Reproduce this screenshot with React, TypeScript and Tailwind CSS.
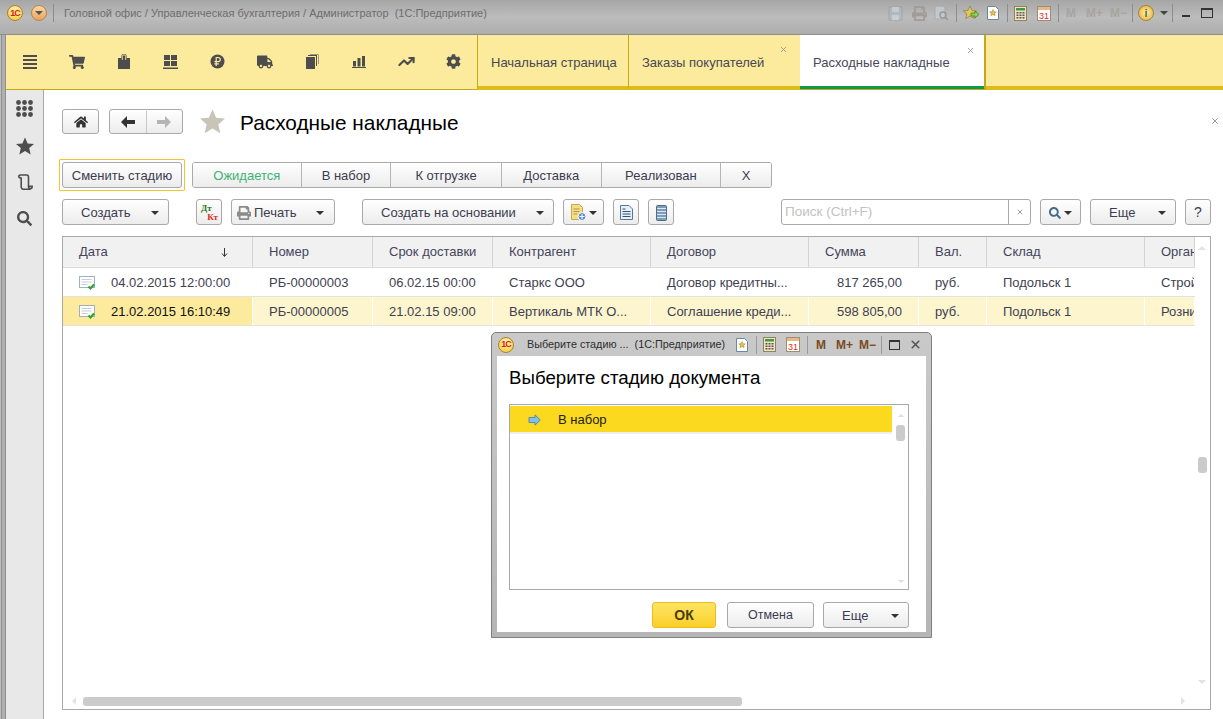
import type { ReactNode } from "react";
import { FaShoppingCart, FaTruck, FaCog, FaHome, FaSearch, FaPrint } from "react-icons/fa";
import { TrendingUp, X } from "lucide-react";

function Caret({ className = "" }: { className?: string }) {
  return <span className={`inline-block w-0 h-0 border-x-[4px] border-x-transparent border-t-[4px] border-t-[#333] ${className}`} />;
}

function Logo1C() {
  return (
    <span className="flex h-[16px] w-[16px] items-center justify-center rounded-full border border-[#a8822a] bg-[radial-gradient(circle_at_50%_30%,#fff6b0,#f7c531)] text-[9px] font-bold leading-none tracking-[-1px] text-[#d8231f]">
      1С
    </span>
  );
}

const btn = "flex items-center rounded-[3px] border border-[#a9a9a9] bg-gradient-to-b from-white to-[#ececec] pt-[1px] text-[#3c3c50]";

function FloppyIcon() {
  return (
    <svg width="15" height="15" viewBox="0 0 15 15" className="opacity-60">
      <path d="M1 1h13v13H1z" fill="#a9bac6" stroke="#8a9aa6" />
      <path d="M4 1h7v5H4zM4 9h7v5H4z" fill="#d5dadd" />
    </svg>
  );
}

function PreviewIcon() {
  return (
    <svg width="16" height="16" viewBox="0 0 16 16" className="opacity-60">
      <path d="M2 1h8l2 2v11H2z" fill="#ccd4da" stroke="#9aa7b1" />
      <circle cx="10" cy="10" r="3" fill="none" stroke="#87807a" strokeWidth="1.4" />
      <path d="M12 12l3 3" stroke="#87807a" strokeWidth="1.6" />
    </svg>
  );
}

function FavArrowIcon() {
  return (
    <svg width="16" height="16" viewBox="0 0 16 16">
      <path d="M7 1l2 4.400 4.600.5-3.400 3 1 4.600L7 11l-4.200 2.500 1-4.600L.4 5.900 5 5.400z" fill="#e3c65c" stroke="#8a7a3a" strokeWidth=".7" />
      <path d="M8 8h4V6l4 3.500-4 3.500V11H8z" fill="#8fd14f" stroke="#3d7d20" strokeWidth=".7" />
    </svg>
  );
}

function FavDocIcon() {
  return (
    <svg width="12" height="14" viewBox="0 0 12 14">
      <path d="M.5.500h8l3 3v10H.5z" fill="#fff" stroke="#6b86a0" />
      <path d="M6 3.500l1 2.200 2.300.2-1.700 1.500.5 2.300L6 8.500 3.900 9.700l.5-2.300-1.700-1.500L5 5.700z" fill="#e6bd45" stroke="#9a8130" strokeWidth=".5" />
    </svg>
  );
}

function CalcIcon() {
  return (
    <svg width="13" height="15" viewBox="0 0 13 15">
      <rect x=".5" y=".5" width="12" height="14" fill="#f3e3c0" stroke="#8f8462" />
      <rect x="2" y="2" width="9" height="2.500" fill="#3f9a3f" />
      {[6, 8.500, 11].map((y) => [2.500, 5.500, 8.500].map((x) => <rect key={`${x}-${y}`} x={x} y={y} width="2" height="1.500" fill="#555" />))}
    </svg>
  );
}

function CalendarIcon() {
  return (
    <svg width="14" height="15" viewBox="0 0 14 15">
      <rect x=".5" y=".5" width="13" height="14" fill="#fff" stroke="#9a8f73" />
      <rect x="1" y="1" width="12" height="3" fill="#e9b887" />
      <text x="7" y="13" textAnchor="middle" fontSize="9" fill="#e0301e" fontFamily="Liberation Sans">31</text>
    </svg>
  );
}

function MenuIcon() {
  return (
    <svg width="14" height="14" viewBox="0 0 14 14" fill="#4d4d4d">
      <path d="M0 0h14v2H0zM0 4h14v2H0zM0 8h14v2H0zM0 12h14v2H0z" />
    </svg>
  );
}

function BagIcon() {
  return (
    <svg width="12" height="15" viewBox="0 0 12 15">
      <path d="M0 4h3.300V2.500a2.700 2.700 0 0 1 5.400 0V4H12v11H0z" fill="#4d4d4d" />
      <path d="M4.300 6V2.500a1.700 1.700 0 0 1 3.400 0V6" fill="none" stroke="#fcec9c" strokeWidth=".9" />
    </svg>
  );
}

function PanelsIcon() {
  return (
    <svg width="15" height="14" viewBox="0 0 15 14" fill="#4d4d4d">
      <path d="M1 0h6v5H1zM8 0h6v5H8zM1 6h6v5H1zM8 6h6v5H8zM0 12.500h15V14H0z" />
    </svg>
  );
}

function RubleIcon() {
  return (
    <svg width="15" height="15" viewBox="0 0 15 15">
      <circle cx="7.500" cy="7.500" r="7" fill="#4d4d4d" />
      <path d="M6.200 12V3.500h2a2 2 0 0 1 0 4.200H4.400M4.400 9.900h4.400" fill="none" stroke="#fcec9c" strokeWidth="1.200" />
    </svg>
  );
}

function DocsIcon() {
  return (
    <svg width="13" height="15" viewBox="0 0 13 15" fill="#4d4d4d">
      <path d="M0 3h9v12H0zM10 2H2V1h9v11h-1zM12 0H4v.500h8.500V10H12z" />
    </svg>
  );
}

function BarsIcon() {
  return (
    <svg width="14" height="12" viewBox="0 0 14 12" fill="#4d4d4d">
      <path d="M1 5h3v5.500H1zM5.500 2h3v8.500h-3zM10 0h3v10.500h-3zM0 11h14v1H0z" />
    </svg>
  );
}

function AppsIcon() {
  return (
    <svg width="17" height="17" viewBox="0 0 17 17" fill="#4d4d4d">
      {[2.500, 8.500, 14.500].map((y) => [2.500, 8.500, 14.500].map((x) => <circle key={`${x}-${y}`} cx={x} cy={y} r="2.400" />))}
    </svg>
  );
}

function StarIcon({ size, color }: { size: number; color: string }) {
  return (
    <svg width={size} height={size} viewBox="0 0 24 24" fill={color}>
      <path d="M12 .5l3.500 8 8.500.7-6.400 5.600 1.900 8.500L12 18.800l-7.500 4.500 1.900-8.500L0 9.200l8.500-.7z" />
    </svg>
  );
}

function HistoryIcon() {
  return (
    <svg width="16" height="17" viewBox="0 0 16 17" fill="none" stroke="#4d4d4d" strokeWidth="1.600">
      <path d="M4.200 3.500v9.300a2.500 2.500 0 0 0 2.500 2.500h6.800" />
      <path d="M4.200 3.500a1.400 1.400 0 0 1-2.400-1 1.500 1.500 0 0 1 1.500-1.500h6.200a2 2 0 0 1 2 2v9.800a1.800 1.800 0 0 0 1.800 1.800 1.800 1.800 0 0 0 1.800-1.800v-.6h-3.600" />
    </svg>
  );
}

function DocCheckIcon() {
  return (
    <svg width="17" height="15" viewBox="0 0 17 15">
      <rect x=".5" y=".5" width="15" height="11" fill="#fff" stroke="#9fb1be" />
      <path d="M2.500 3.500h10M2.500 6h10M2.500 8.500h6" stroke="#c3ced6" />
      <path d="M9.500 10.500l2 2 3.500-4" fill="none" stroke="#2fa12f" strokeWidth="2.200" />
    </svg>
  );
}

function DtKtIcon() {
  return (
    <span className="relative block h-[18px] w-[18px] font-['Liberation_Serif',serif] text-[9px] font-bold leading-none">
      <span className="absolute left-[1px] top-0 text-[#2a7a12]">Дт</span>
      <span className="absolute bottom-0 right-0 text-[#e02b20]">Кт</span>
    </span>
  );
}

function GenerateIcon() {
  return (
    <svg width="16" height="17" viewBox="0 0 16 17">
      <path d="M.5.500h8l3 3v12H.5z" fill="#f4dc8c" stroke="#c9a94a" />
      <path d="M2.500 5h6M2.500 7.500h6M2.500 10h4" stroke="#b9973c" />
      <circle cx="11" cy="12.500" r="4" fill="#5b8fc7" stroke="#fff" />
      <path d="M11 10v5M8.500 12.500h5" stroke="#fff" />
    </svg>
  );
}

function ReportIcon() {
  return (
    <svg width="13" height="15" viewBox="0 0 13 15">
      <path d="M.5.500h8.500l3.500 3.500v10.500H.5z" fill="#e6f0f8" stroke="#53799a" />
      <path d="M2.500 4h3M2.500 6.500h8M2.500 9h8M2.500 11.500h8" stroke="#33556f" />
    </svg>
  );
}

function ListIcon() {
  return (
    <svg width="11" height="16" viewBox="0 0 11 16">
      <rect x=".5" y=".5" width="10" height="15" rx="1" fill="#7c9cb8" stroke="#4e6c85" />
      <path d="M1 3.500h9M1 6.500h9M1 9.500h9M1 12.500h9" stroke="#dbe6ee" />
    </svg>
  );
}

function StepArrow({ color, flip }: { color: string; flip?: boolean }) {
  return (
    <svg width="14" height="12" viewBox="0 0 14 12" fill={color} className={flip ? "-scale-x-100" : ""}>
      <path d="M0 6l6-6v4h8v4H6v4z" />
    </svg>
  );
}

function TitleBar() {
  return (
    <div className="flex h-[35px] items-center border-b border-[#8e8e8e] bg-gradient-to-b from-[#a6a6a6] via-[#bcbcbc] to-[#adadad] pb-[8px] pl-[7px] pr-[10px]">
      <Logo1C />
      <span className="ml-[8px] flex h-[16px] w-[16px] items-center justify-center rounded-full border border-[#b9834a] bg-gradient-to-b from-[#fbd9a5] to-[#e8a25e]">
        <Caret className="border-t-[#555]" />
      </span>
      <span className="ml-[6px] mr-[10px] h-[18px] w-px bg-[#8c8c8c]" />
      <span className="text-[11px] text-[#6d6d6d]">Головной офис / Управленческая бухгалтерия / Администратор&nbsp; (1С:Предприятие)</span>
      <div className="ml-auto flex items-center">
        <FloppyIcon />
        <FaPrint className="ml-[9px] text-[15px] text-[#a09c98]" />
        <span className="ml-[6px]"><PreviewIcon /></span>
        <span className="ml-[7px] h-[18px] w-px bg-[#8c8c8c]" />
        <span className="ml-[6px]"><FavArrowIcon /></span>
        <span className="ml-[8px]"><FavDocIcon /></span>
        <span className="ml-[8px] h-[18px] w-px bg-[#8c8c8c]" />
        <span className="ml-[6px]"><CalcIcon /></span>
        <span className="ml-[10px]"><CalendarIcon /></span>
        <span className="ml-[7px] h-[18px] w-px bg-[#8c8c8c]" />
        <span className="ml-[7px] flex text-[12px] font-bold text-[#a8a49f]">
          <span>M</span>
          <span className="ml-[10px]">M+</span>
          <span className="ml-[7px]">M−</span>
        </span>
        <span className="ml-[5px] h-[18px] w-px bg-[#8c8c8c]" />
        <span className="ml-[5px] flex h-[16px] w-[16px] items-center justify-center rounded-full border border-[#a8842b] bg-[radial-gradient(circle,#fff2b8,#eaa62a)] text-[11px] font-bold text-[#3d7a23]">i</span>
        <Caret className="ml-[6px] border-t-[#444]" />
        <span className="ml-[4px] h-[18px] w-px bg-[#8c8c8c]" />
        <span className="ml-[9px] mt-[6px] h-[2px] w-[8px] bg-[#333]" />
        <span className="ml-[11px] h-[10px] w-[12px] border border-t-2 border-[#333]" />
      </div>
    </div>
  );
}

const sections: ReactNode[] = [
  <MenuIcon />, <FaShoppingCart className="text-[16px] text-[#4d4d4d]" />, <BagIcon />, <PanelsIcon />, <RubleIcon />,
  <FaTruck className="text-[16px] text-[#4d4d4d]" />, <DocsIcon />, <BarsIcon />,
  <TrendingUp size={17} strokeWidth={3} className="text-[#4d4d4d]" />, <FaCog className="text-[15px] text-[#4d4d4d]" />,
];

function Tab({ label, width, closable }: { label: string; width: string; closable?: boolean }) {
  return (
    <div className={`relative flex h-[55px] items-center border-l border-b-[4px] border-l-[#c4a914] border-b-[#dcbc18] bg-[#fceb9c] pl-[13px] pt-[5px] text-[13px] text-[#474757] ${width}`}>
      {label}
      {closable && <X size={9} className="absolute right-[12px] top-[10px] text-[#888]" />}
    </div>
  );
}

function TabsBar() {
  return (
    <div className="flex h-[55px] bg-[#fceb9c]">
      <div className="flex w-[471px] items-center border-b border-[#c4a914] pb-[1px]">
        {sections.map((icon, i) => (
          <span key={i} className="flex h-[16px] w-[47.200px] items-center justify-center">{icon}</span>
        ))}
      </div>
      <Tab label="Начальная страница" width="w-[151px]" />
      <Tab label="Заказы покупателей" width="w-[172px]" closable />
      <div className="relative flex h-[55px] w-[186px] items-center border-r-2 border-b border-r-[#c4a914] border-b-[#c4a914] bg-white pl-[13px] pt-[2px] text-[13px] text-[#474757] shadow-[inset_0_-3px_0_#0d9a4e]">
        Расходные накладные
        <X size={9} className="absolute right-[9px] top-[11px] text-[#888]" />
      </div>
      <div className="flex-1 border-b-[4px] border-b-[#dcbc18]" />
    </div>
  );
}

function Sidebar() {
  return (
    <div className="flex w-[38px] shrink-0 flex-col items-center border-r border-[#a8a8a8] bg-[#e8e8e8] pt-[10px]">
      <AppsIcon />
      <span className="mt-[20px]"><StarIcon size={18} color="#4d4d4d" /></span>
      <span className="mt-[19px]"><HistoryIcon /></span>
      <FaSearch className="mt-[20px] text-[15px] text-[#4d4d4d]" />
    </div>
  );
}

const stages = [
  { label: "Ожидается", width: "w-[109px]", active: true },
  { label: "В набор", width: "w-[90px]" },
  { label: "К отгрузке", width: "w-[111px]" },
  { label: "Доставка", width: "w-[100px]" },
  { label: "Реализован", width: "w-[120px]" },
  { label: "Х", width: "w-[50px]" },
];

const columns = [
  { label: "Дата", width: "w-[190px]" },
  { label: "Номер", width: "w-[120px]" },
  { label: "Срок доставки", width: "w-[120px]" },
  { label: "Контрагент", width: "w-[158px]" },
  { label: "Договор", width: "w-[158px]" },
  { label: "Сумма", width: "w-[110px]" },
  { label: "Вал.", width: "w-[68px]" },
  { label: "Склад", width: "w-[158px]" },
  { label: "Организация", width: "w-[50px]" },
];

const rows = [
  ["04.02.2015 12:00:00", "РБ-00000003", "06.02.15 00:00", "Старкс ООО", "Договор кредитны...", "817 265,00", "руб.", "Подольск 1", "Строймаркет"],
  ["21.02.2015 16:10:49", "РБ-00000005", "21.02.15 09:00", "Вертикаль МТК О...", "Соглашение креди...", "598 805,00", "руб.", "Подольск 1", "Розница"],
];

function Toolbar() {
  return (
    <div className="mt-[8px] flex h-[26px] items-stretch">
      <button className={`${btn} w-[107px] pl-[18px] text-[13px]`}>Создать<Caret className="ml-auto mr-[9px]" /></button>
      <button className={`${btn} ml-[27px] w-[26px] justify-center`}><DtKtIcon /></button>
      <button className={`${btn} ml-[9px] w-[104px] pl-[5px] text-[13px]`}>
        <FaPrint className="mr-[3px] text-[14px] text-[#8a8a8a]" />Печать<Caret className="ml-auto mr-[10px]" />
      </button>
      <button className={`${btn} ml-[27px] w-[192px] pl-[18px] text-[13px]`}>Создать на основании<Caret className="ml-auto mr-[9px]" /></button>
      <button className={`${btn} ml-[9px] w-[41px] justify-center gap-[2px]`}><GenerateIcon /><Caret /></button>
      <button className={`${btn} ml-[9px] w-[26px] justify-center`}><ReportIcon /></button>
      <button className={`${btn} ml-[9px] w-[26px] justify-center`}><ListIcon /></button>
      <div className="ml-[107px] flex w-[250px] items-center rounded-[3px] border border-[#a9a9a9] bg-white">
        <span className="flex-1 pl-[3px] text-[13.500px] text-[#c2c2c2]">Поиск (Ctrl+F)</span>
        <span className="flex h-full w-[22px] items-center justify-center border-l border-[#a9a9a9]"><X size={8} className="text-[#666]" /></span>
      </div>
      <button className={`${btn} ml-[9px] w-[41px] justify-center gap-[3px]`}><FaSearch className="text-[12px] text-[#3f6a8c]" /><Caret /></button>
      <button className={`${btn} ml-[9px] w-[86px] pl-[18px] text-[13px]`}>Еще<Caret className="ml-auto mr-[9px]" /></button>
      <button className={`${btn} ml-[9px] w-[26px] justify-center text-[14px]`}>?</button>
    </div>
  );
}

function DataTable() {
  return (
    <div className="relative mt-[11px] flex h-[474px] w-[1149px] flex-col overflow-hidden border border-[#a9a9a9]">
      <div className="flex h-[31px] w-[1132px] overflow-hidden border-b border-[#dcdcdc] bg-[#f1f1f1]">
        {columns.map((c, i) => (
          <div key={c.label} className={`flex shrink-0 items-center overflow-hidden whitespace-nowrap border-r border-[#d3d3d3] pl-[16px] text-[13px] text-[#44445a] ${c.width}`}>
            {c.label}
            {i === 0 && (
              <svg width="7" height="9" viewBox="0 0 7 9" className="ml-[113px]">
                <path d="M3.500 0v8M1 5.500l2.500 3 2.500-3" fill="none" stroke="#333" />
              </svg>
            )}
          </div>
        ))}
      </div>
      {rows.map((row, r) => (
        <div key={row[1]} className={`flex h-[29px] w-[1132px] shrink-0 overflow-hidden border-b border-[#e2e2e2] ${r === 1 ? "bg-[#fdf5ce]" : "bg-white"}`}>
          {row.map((cell, i) => (
            <div
              key={i}
              className={`flex shrink-0 items-center overflow-hidden whitespace-nowrap border-r border-white pt-[2px] text-[13px] ${columns[i].width} ${i === 5 ? "justify-end pr-[16px]" : "pl-[16px]"} ${i === 0 && r === 1 ? "bg-[#fceb9c] text-[#111]" : "text-[#3f3f52]"}`}
            >
              {i === 0 && <span className="mr-[15px] shrink-0"><DocCheckIcon /></span>}
              {cell}
            </div>
          ))}
        </div>
      ))}
      <span className="absolute right-[4px] top-[9px] h-0 w-0 border-x-[4px] border-x-transparent border-b-[4px] border-b-[#e3e3e3]" />
      <span className="absolute right-[3px] top-[220px] h-[16px] w-[9px] rounded-[3px] bg-[#cbcbcb]" />
      <span className="absolute bottom-[25px] right-[4px] h-0 w-0 border-x-[4px] border-x-transparent border-t-[4px] border-t-[#e3e3e3]" />
      <span className="absolute bottom-[3px] left-[20px] h-[9px] w-[659px] rounded-[3px] bg-[#cbcbcb]" />
      <span className="absolute bottom-[4px] left-[9px] h-0 w-0 border-y-[4px] border-y-transparent border-r-[4px] border-r-[#e3e3e3]" />
      <span className="absolute bottom-[4px] right-[25px] h-0 w-0 border-y-[4px] border-y-transparent border-l-[4px] border-l-[#e3e3e3]" />
    </div>
  );
}

function StageDialog() {
  return (
    <div className="absolute left-[491px] top-[332px] flex h-[306px] w-[441px] flex-col rounded-t-[5px] border border-[#7f7f7f] bg-gradient-to-b from-[#c9c9c9] to-[#b5b5b5] px-[5px] pb-[5px]">
      <div className="flex h-[23px] shrink-0 items-center">
        <span className="ml-[1px]"><Logo1C /></span>
        <span className="ml-[13px] text-[10.800px] text-[#2f2f2f]">Выберите стадию ...&nbsp; (1С:Предприятие)</span>
        <div className="ml-auto flex items-center pr-[4px]">
          <FavDocIcon />
          <span className="ml-[8px] h-[18px] w-px bg-[#9a9a9a]" />
          <span className="ml-[6px]"><CalcIcon /></span>
          <span className="ml-[10px]"><CalendarIcon /></span>
          <span className="ml-[7px] h-[18px] w-px bg-[#9a9a9a]" />
          <span className="ml-[8px] flex text-[12px] font-bold text-[#7b4a22]">
            <span>M</span>
            <span className="ml-[10px]">M+</span>
            <span className="ml-[6px]">M−</span>
          </span>
          <span className="ml-[5px] h-[18px] w-px bg-[#9a9a9a]" />
          <span className="ml-[7px] h-[10px] w-[11px] border border-t-2 border-[#333]" />
          <X size={13} strokeWidth={3} className="ml-[9px] text-[#555]" />
        </div>
      </div>
      <div className="flex flex-1 flex-col bg-white px-[12px]">
        <h2 className="mt-[11px] text-[18.700px] leading-[21px] text-black">Выберите стадию документа</h2>
        <div className="relative mt-[16px] h-[186px] w-[400px] border border-[#a9a9a9] bg-white">
          <div className="mt-[1px] flex h-[26px] w-[382px] items-center bg-[#fbd91f] pt-[1px] text-[13px] text-[#222]">
            <svg width="13" height="12" viewBox="0 0 13 12" className="ml-[18px]">
              <path d="M1 3.500h6V.8L12.300 6 7 11.200V8.500H1z" fill="#7cc2ec" stroke="#5a8aa8" />
            </svg>
            <span className="ml-[17px]">В набор</span>
          </div>
          <div className="h-[2px] w-[382px] bg-[#eeeeee]" />
          <span className="absolute right-[4px] top-[9px] h-0 w-0 border-x-[3px] border-x-transparent border-b-[3px] border-b-[#dcdcdc]" />
          <span className="absolute right-[3px] top-[20px] h-[16px] w-[9px] rounded-[3px] bg-[#cbcbcb]" />
          <span className="absolute bottom-[6px] right-[4px] h-0 w-0 border-x-[3px] border-x-transparent border-t-[3px] border-t-[#dcdcdc]" />
        </div>
        <div className="mt-[12px] flex h-[26px] justify-end gap-[11px] pr-[5px]">
          <button className="w-[64px] rounded-[3px] border border-[#eebc1e] bg-gradient-to-b from-[#fde563] to-[#fbcf23] text-[14px] font-bold text-[#4a3a10]">ОК</button>
          <button className={`${btn} w-[87px] justify-center text-[12.500px]`}>Отмена</button>
          <button className={`${btn} -ml-[2px] w-[86px] pl-[18px] text-[13px]`}>Еще<Caret className="ml-auto mr-[9px]" /></button>
        </div>
      </div>
    </div>
  );
}

export default function App() {
  return (
    <div className="relative h-[719px] w-[1223px] overflow-hidden bg-[#b4b4b4] font-['Liberation_Sans',Arial,sans-serif]">
      <TitleBar />
      <div className="flex h-[684px] flex-col bg-[linear-gradient(90deg,#c0c0c0_0_1px,#8f8f8f_1px_2px,#b0b0b0_2px_5px,#8f8f8f_5px_6px,#e8e8e8_6px)] pl-[6px]">
        <TabsBar />
        <div className="flex min-h-0 flex-1">
          <Sidebar />
          <main className="relative flex-1 bg-white pl-[18px]">
            <div className="mt-[19px] flex h-[25px] items-center">
              <button className={`${btn} h-full w-[37px] justify-center`}><FaHome className="text-[14px] text-[#333]" /></button>
              <div className={`${btn} ml-[10px] h-full w-[74px]`}>
                <span className="flex h-full flex-1 items-center justify-center border-r border-[#c8c8c8]"><StepArrow color="#333" /></span>
                <span className="flex h-full flex-1 items-center justify-center"><StepArrow color="#b4b4b4" flip /></span>
              </div>
              <span className="ml-[17px]"><StarIcon size={25} color="#c8c4b6" /></span>
              <h1 className="ml-[15px] pt-[4px] text-[20.800px] leading-none text-black">Расходные накладные</h1>
              <X size={10} className="absolute right-[3px] top-[26px] text-[#888]" />
            </div>
            <div className="mt-[25px] flex items-center">
              <div className="-ml-[3px] rounded-[1px] border border-[#f4c430] p-[2px]">
                <button className={`${btn} h-[26px] w-[120px] justify-center text-[13px]`}>Сменить стадию</button>
              </div>
              <div className="ml-[7px] flex h-[26px] w-[580px] overflow-hidden rounded-[3px] border border-[#a9a9a9]">
                {stages.map((s) => (
                  <span
                    key={s.label}
                    className={`flex items-center justify-center border-r border-[#b5b5b5] bg-gradient-to-b from-white to-[#ececec] pt-[1px] text-[13px] last:border-r-0 ${s.width} ${s.active ? "text-[#3bb273]" : "text-[#3c3c50]"}`}
                  >
                    {s.label}
                  </span>
                ))}
              </div>
            </div>
            <Toolbar />
            <DataTable />
          </main>
        </div>
      </div>
      <StageDialog />
    </div>
  );
}
